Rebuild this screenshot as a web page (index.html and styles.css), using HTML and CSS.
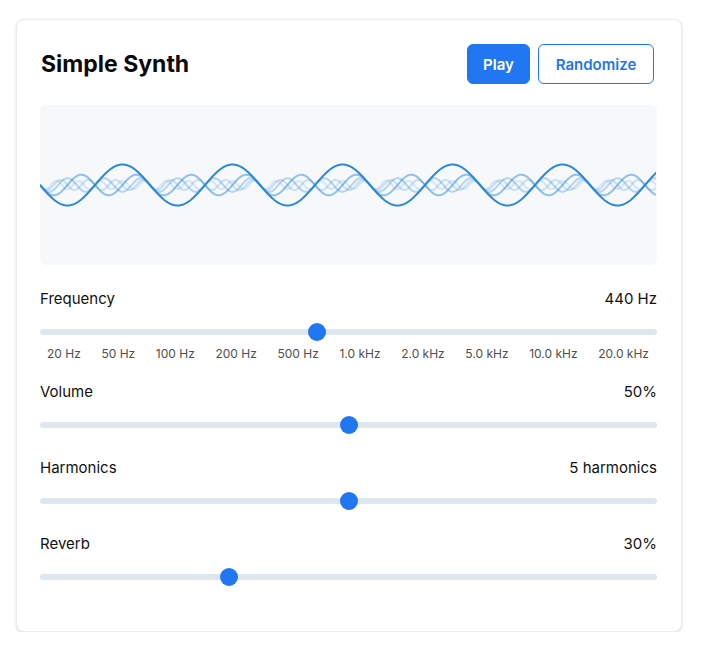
FILE: index.html
```html
<!DOCTYPE html>
<html>
<head>
<meta charset="utf-8">
<link rel="stylesheet" href="styles.css">
</head>
<body>
<div class="card">
  <div class="header">
    <h1 class="title">Simple Synth</h1>
    <div class="actions">
      <button class="btn btn-primary">Play</button>
      <button class="btn btn-outline">Randomize</button>
    </div>
  </div>
  <div class="scope">
    <svg id="wave" class="wave" width="616" height="160" viewBox="0 0 616 160"></svg>
  </div>
  <div class="controls">
    <div class="group">
      <div class="row"><span class="label">Frequency</span><span class="value">440 Hz</span></div>
      <input class="slider" type="range" min="0" max="1000" value="447">
      <div class="ticks">
        <span>20 Hz</span><span>50 Hz</span><span>100 Hz</span><span>200 Hz</span><span>500 Hz</span><span>1.0 kHz</span><span>2.0 kHz</span><span>5.0 kHz</span><span>10.0 kHz</span><span>20.0 kHz</span>
      </div>
    </div>
    <div class="group">
      <div class="row"><span class="label">Volume</span><span class="value">50%</span></div>
      <input class="slider" type="range" min="0" max="100" value="50">
    </div>
    <div class="group">
      <div class="row"><span class="label">Harmonics</span><span class="value">5 harmonics</span></div>
      <input class="slider" type="range" min="1" max="9" value="5">
    </div>
    <div class="group">
      <div class="row"><span class="label">Reverb</span><span class="value">30%</span></div>
      <input class="slider" type="range" min="0" max="100" value="30">
    </div>
  </div>
</div>
<script src="script.js"></script>
</body>
</html>
```

FILE: styles.css
```css
* { box-sizing: border-box; }
html, body { margin: 0; padding: 0; background: #fff; }
body {
  font-family: "Inter", "Liberation Sans", sans-serif;
  color: #111;
}
.card {
  width: 666px;
  margin: 19px 0 0 16px;
  border: 1px solid #ececec;
  border-radius: 8px;
  box-shadow: 0 1px 3px rgba(0,0,0,0.14);
  padding: 24px 24px 24px 23px;
  background: #fff;
}
.header {
  display: flex;
  align-items: center;
  justify-content: space-between;
  height: 40px;
}
.title {
  margin: 0 0 0 1px;
  font-size: 23px;
  font-weight: 700;
  letter-spacing: 0;
  color: #0a0a0a;
}
.actions {
  display: flex;
  gap: 8px;
  margin-right: 3px;
}
.btn {
  height: 40px;
  border-radius: 6px;
  font-family: inherit;
  font-size: 15px;
  font-weight: 600;
  padding: 0 16px;
  cursor: pointer;
}
.btn-primary {
  background: #2176f1;
  color: #fff;
  border: 1px solid #2176f1;
  width: 63px;
  padding: 0;
}
.btn-outline {
  background: #fff;
  color: #2176f1;
  border: 1px solid #2176f1;
  width: 116px;
  padding: 0;
}
.scope {
  margin-top: 21px;
  height: 160px;
  background: #f6f8fa;
  border-radius: 6px;
  overflow: hidden;
}
.wave { display: block; }
.controls {
  margin-top: 23px;
  display: flex;
  flex-direction: column;
  gap: 20px;
  margin-bottom: 18px;
}
.group { display: flex; flex-direction: column; }
.row {
  display: flex;
  justify-content: space-between;
  align-items: center;
  height: 20px;
  font-size: 15px;
  color: #111;
}
.slider {
  -webkit-appearance: none;
  appearance: none;
  width: 100%;
  height: 24px;
  margin: 12px 0 0 0;
  background: transparent;
  display: block;
}
.slider::-webkit-slider-runnable-track {
  height: 6px;
  background: #dfe6ee;
  border-radius: 3px;
}
.slider::-webkit-slider-thumb {
  -webkit-appearance: none;
  width: 18px;
  height: 18px;
  border-radius: 50%;
  background: #2176f1;
  margin-top: -6px;
  border: none;
}
.ticks {
  display: flex;
  justify-content: space-between;
  padding: 0 8px 0 7px;
  margin-top: 3px;
  height: 14px;
  font-size: 12px;
  line-height: 14px;
  color: #4f4f4f;
}
```

FILE: script.js
```js
(function () {
  var svg = document.getElementById('wave');
  var ns = 'http://www.w3.org/2000/svg';
  var W = 617, cy = 80, A = 20.5, P = 110;
  var layers = [
    { n: 5, op: 0.16 },
    { n: 4, op: 0.22 },
    { n: 3, op: 0.32 },
    { n: 2, op: 0.5 },
    { n: 1, op: 1 }
  ];
  layers.forEach(function (l) {
    var d = '';
    for (var x = 0; x <= W; x += 1) {
      var y = cy + (A / l.n) * Math.sin(2 * Math.PI * l.n * x / P);
      d += (x === 0 ? 'M' : 'L') + x + ' ' + y.toFixed(2);
    }
    var p = document.createElementNS(ns, 'path');
    p.setAttribute('d', d);
    p.setAttribute('fill', 'none');
    p.setAttribute('stroke', '#2a89d9');
    p.setAttribute('stroke-width', '2');
    p.setAttribute('stroke-opacity', l.op);
    svg.appendChild(p);
  });
})();
```
